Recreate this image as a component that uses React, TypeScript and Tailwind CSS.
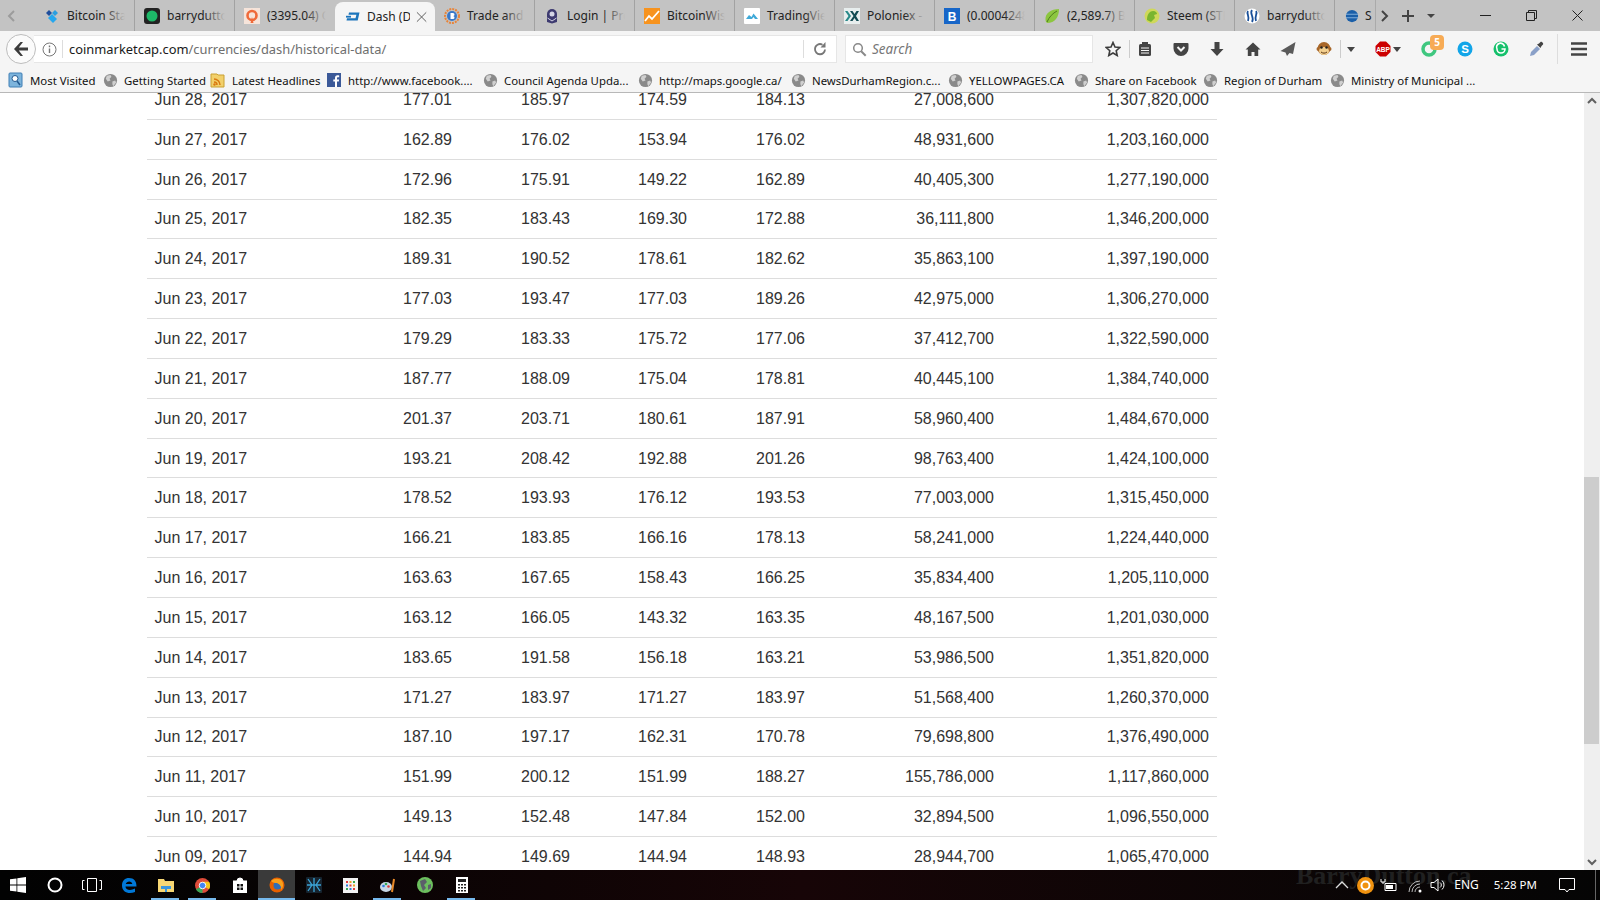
import type { ReactNode } from "react";

const UI = "font-['Noto_Sans','Open_Sans',sans-serif]";

const rows = [
  ["Jun 28, 2017", "177.01", "185.97", "174.59", "184.13", "27,008,600", "1,307,820,000"],
  ["Jun 27, 2017", "162.89", "176.02", "153.94", "176.02", "48,931,600", "1,203,160,000"],
  ["Jun 26, 2017", "172.96", "175.91", "149.22", "162.89", "40,405,300", "1,277,190,000"],
  ["Jun 25, 2017", "182.35", "183.43", "169.30", "172.88", "36,111,800", "1,346,200,000"],
  ["Jun 24, 2017", "189.31", "190.52", "178.61", "182.62", "35,863,100", "1,397,190,000"],
  ["Jun 23, 2017", "177.03", "193.47", "177.03", "189.26", "42,975,000", "1,306,270,000"],
  ["Jun 22, 2017", "179.29", "183.33", "175.72", "177.06", "37,412,700", "1,322,590,000"],
  ["Jun 21, 2017", "187.77", "188.09", "175.04", "178.81", "40,445,100", "1,384,740,000"],
  ["Jun 20, 2017", "201.37", "203.71", "180.61", "187.91", "58,960,400", "1,484,670,000"],
  ["Jun 19, 2017", "193.21", "208.42", "192.88", "201.26", "98,763,400", "1,424,100,000"],
  ["Jun 18, 2017", "178.52", "193.93", "176.12", "193.53", "77,003,000", "1,315,450,000"],
  ["Jun 17, 2017", "166.21", "183.85", "166.16", "178.13", "58,241,000", "1,224,440,000"],
  ["Jun 16, 2017", "163.63", "167.65", "158.43", "166.25", "35,834,400", "1,205,110,000"],
  ["Jun 15, 2017", "163.12", "166.05", "143.32", "163.35", "48,167,500", "1,201,030,000"],
  ["Jun 14, 2017", "183.65", "191.58", "156.18", "163.21", "53,986,500", "1,351,820,000"],
  ["Jun 13, 2017", "171.27", "183.97", "171.27", "183.97", "51,568,400", "1,260,370,000"],
  ["Jun 12, 2017", "187.10", "197.17", "162.31", "170.78", "79,698,800", "1,376,490,000"],
  ["Jun 11, 2017", "151.99", "200.12", "151.99", "188.27", "155,786,000", "1,117,860,000"],
  ["Jun 10, 2017", "149.13", "152.48", "147.84", "152.00", "32,894,500", "1,096,550,000"],
  ["Jun 09, 2017", "144.94", "149.69", "144.94", "148.93", "28,944,700", "1,065,470,000"],
];

function Ico({ size = 16, children }: { size?: number; children: ReactNode }) {
  return (
    <svg width={size} height={size} viewBox="0 0 16 16" className="shrink-0">
      {children}
    </svg>
  );
}

function Globe() {
  return (
    <Ico size={15}>
      <circle cx="8" cy="8" r="7" fill="#8a8a8a" />
      <path d="M4 3l4-1 1 2-2 2 1 2-3 1-2-3zM10 9l3-1 1 2-3 4-1-2z" fill="#d0d0d0" />
    </Ico>
  );
}

const tabs: { title: string; icon: ReactNode }[] = [
  {
    title: "Bitcoin Stack",
    icon: (
      <Ico>
        <path d="M5 2l3 3-3 3-3-3z" fill="#1f4e9c" />
        <path d="M11 2l3 3-3 3-3-3z" fill="#2a9fe0" />
        <path d="M8 6l5 5-4 4-5-5z" fill="#25a7ee" />
      </Ico>
    ),
  },
  {
    title: "barrydutton",
    icon: (
      <Ico>
        <rect width="16" height="16" rx="3" fill="#222" />
        <circle cx="8" cy="8" r="5.500" fill="#1db868" />
      </Ico>
    ),
  },
  {
    title: "(3395.04) Qu",
    icon: (
      <Ico>
        <rect width="16" height="16" fill="#f6e4da" />
        <circle cx="8" cy="7.500" r="4.500" fill="none" stroke="#ef6a3a" strokeWidth="2.600" />
        <path d="M8 9l1.500 6H6.500z" fill="#ef6a3a" />
      </Ico>
    ),
  },
  {
    title: "Dash (D",
    icon: (
      <Ico>
        <path d="M4 3.500h10.500l-1.800 8H1.500l.5-2.200h8.500l.9-3.600H3.500z" fill="#1c75bc" />
        <rect x="1" y="6.800" width="5" height="1.800" fill="#1c75bc" />
      </Ico>
    ),
  },
  {
    title: "Trade and e",
    icon: (
      <Ico>
        <circle cx="8" cy="8" r="7" fill="none" stroke="#e8843a" strokeWidth="2" strokeDasharray="2 1" />
        <circle cx="8" cy="8" r="5" fill="#3a78c8" />
        <path d="M6.500 5h2.500a1.500 1.500 0 010 3 1.500 1.500 0 010 3H6.500z" fill="#fff" />
      </Ico>
    ),
  },
  {
    title: "Login | Prot",
    icon: (
      <Ico>
        <path d="M3 6a5 5 0 0110 0v8l-5 1.500L3 14z" fill="#3d3a70" />
        <rect x="5.500" y="3.500" width="5" height="5" rx="2.500" fill="#d5d5e5" />
        <path d="M3.500 10l4.500 3 4.500-3" stroke="#d5d5e5" fill="none" />
      </Ico>
    ),
  },
  {
    title: "BitcoinWisdom",
    icon: (
      <Ico>
        <rect width="16" height="16" fill="#f7931e" />
        <path d="M1 13l4-5 3 3 7-8" stroke="#fff" strokeWidth="1.800" fill="none" />
      </Ico>
    ),
  },
  {
    title: "TradingView",
    icon: (
      <Ico>
        <rect width="16" height="16" rx="1" fill="#fff" />
        <path d="M2 11l3-4 2.500 2 2-3.500 4.500 5.500h-3l-1.500-2-1.500 2H2z" fill="#3fa9d8" />
      </Ico>
    ),
  },
  {
    title: "Poloniex - B",
    icon: (
      <Ico>
        <rect width="16" height="16" fill="#e8eeee" />
        <path d="M1 3h2.500l3.500 5-3.500 5H1l3.500-5z" fill="#2a8a8a" />
        <path d="M6 3h2.500l2 3 2-3H15l-3 5 3 5h-2.500l-2-3-2 3H6l3.500-5z" fill="#114a52" />
      </Ico>
    ),
  },
  {
    title: "(0.00042482",
    icon: (
      <Ico>
        <rect width="16" height="16" fill="#1766c8" />
        <text x="8" y="13" textAnchor="middle" fontSize="12" fontWeight="700" fill="#fff" fontFamily="Liberation Sans">
          B
        </text>
      </Ico>
    ),
  },
  {
    title: "(2,589.7) Bit",
    icon: (
      <Ico>
        <path d="M15 1C7 1 1 5 1.500 12c0 1 .5 2 1.500 3C11 15 15 9 15 1z" fill="#8cc63f" />
        <path d="M3 14C5 9 9 5 13 3" stroke="#4f7a1e" fill="none" />
      </Ico>
    ),
  },
  {
    title: "Steem (STE",
    icon: (
      <Ico>
        <circle cx="8" cy="8" r="7.500" fill="#cfd85a" />
        <path d="M3 12c0-6 3-9 6-9 3 0 4 2 4 3l-3 1 1 3-4 4z" fill="#7ab52f" />
      </Ico>
    ),
  },
  {
    title: "barrydutton",
    icon: (
      <Ico>
        <circle cx="8" cy="8" r="7.500" fill="#fff" />
        <path d="M4 3C2 6 6 8 4 13M8 2c-3 4 3 7 0 12M12 3c2 3-2 5 0 10" stroke="#1a5099" strokeWidth="1.800" fill="none" />
      </Ico>
    ),
  },
];

const bookmarks: { label: string; w: string; icon: ReactNode }[] = [
  {
    label: "Most Visited",
    w: "w-[95px]",
    icon: (
      <Ico>
        <rect x="1" y="1" width="13" height="14" rx="1" fill="#7db4dc" stroke="#3f7fb5" />
        <circle cx="7" cy="6.500" r="3" fill="#fff" stroke="#245a90" />
        <path d="M9 9l3 4" stroke="#245a90" strokeWidth="1.500" />
      </Ico>
    ),
  },
  { label: "Getting Started", w: "w-[107px]", icon: <Globe /> },
  {
    label: "Latest Headlines",
    w: "w-[116px]",
    icon: (
      <Ico>
        <path d="M1 2h6l1 1h6v12H1z" fill="#f2d06b" stroke="#c9a033" />
        <path d="M4 7a6 6 0 016 6M4 10a3 3 0 013 3" stroke="#d97a12" strokeWidth="1.500" fill="none" />
        <circle cx="4.500" cy="12.500" r="1.200" fill="#d97a12" />
      </Ico>
    ),
  },
  {
    label: "http://www.facebook....",
    w: "w-[157px]",
    icon: (
      <Ico>
        <rect x="1" y="1" width="14" height="14" fill="#3b5998" />
        <path d="M11 15V9.500h1.800l.3-2H11V6.200c0-.6.200-1 1-1h1.200V3.400c-.3 0-1-.1-1.700-.1-1.500 0-2.500 1-2.500 2.600v1.600H7.300v2H9V15z" fill="#fff" />
      </Ico>
    ),
  },
  { label: "Council Agenda Upda...", w: "w-[155px]", icon: <Globe /> },
  { label: "http://maps.google.ca/", w: "w-[153px]", icon: <Globe /> },
  { label: "NewsDurhamRegion.c...", w: "w-[157px]", icon: <Globe /> },
  { label: "YELLOWPAGES.CA", w: "w-[126px]", icon: <Globe /> },
  { label: "Share on Facebook", w: "w-[129px]", icon: <Globe /> },
  { label: "Region of Durham", w: "w-[127px]", icon: <Globe /> },
  { label: "Ministry of Municipal ...", w: "w-[150px]", icon: <Globe /> },
];

function TabStrip() {
  return (
    <div className={`flex h-[31px] shrink-0 items-end bg-[#c3c3c3] ${UI}`}>
      <div className="flex h-[31px] w-[35px] shrink-0 items-center pl-[5px]">
        <svg width="12" height="14" viewBox="0 0 12 14">
          <path d="M9 2L4 7l5 5" stroke="#9c9c9c" strokeWidth="2" fill="none" />
        </svg>
      </div>
      {tabs.map((t, i) =>
        i === 3 ? (
          <div key={i} className="flex h-[29px] w-[100px] shrink-0 items-center rounded-t-lg bg-[#f5f5f5] pl-[10px] pr-[8px]">
            {t.icon}
            <span className="ml-[6px] w-[46px] overflow-hidden whitespace-nowrap pt-px text-[12px] text-[#222]">{t.title}</span>
            <svg width="12" height="12" viewBox="0 0 12 12" className="ml-[6px]">
              <path d="M1 1l10 10M11 1L1 11" stroke="#555" strokeWidth="1" />
            </svg>
          </div>
        ) : (
          <div
            key={i}
            className={`relative flex h-[31px] w-[100px] shrink-0 items-center overflow-hidden pl-[9px] ${i === 2 ? "" : "border-r border-r-[#a2a2a2]"}`}
          >
            {t.icon}
            <span className="ml-[7px] whitespace-nowrap pt-px text-[12px] text-[#222]">{t.title}</span>
            <div className="absolute inset-y-0 right-0 w-[30px] bg-linear-to-r from-transparent to-[#c3c3c3] to-70%" />
          </div>
        ),
      )}
      <div className="flex h-[31px] w-[40px] shrink-0 items-center overflow-hidden pl-[10px]">
        <Ico size={14}>
          <circle cx="8" cy="8" r="7" fill="#1b5fa8" />
          <path d="M1 6h14M1 10h14" stroke="#8db8e0" />
        </Ico>
        <span className="ml-[6px] pt-px text-[12px] text-[#222]">S</span>
      </div>
      <div className="flex h-[31px] flex-1 items-center border-l border-l-[#aaa]">
        <svg width="10" height="14" viewBox="0 0 10 14" className="ml-[4px]">
          <path d="M2 2l5 5-5 5" stroke="#444" strokeWidth="2" fill="none" />
        </svg>
        <svg width="14" height="14" viewBox="0 0 14 14" className="ml-[11px]">
          <path d="M7 1v12M1 7h12" stroke="#444" strokeWidth="2" />
        </svg>
        <svg width="10" height="6" viewBox="0 0 10 6" className="ml-[11px]">
          <path d="M1 1h8L5 5z" fill="#444" />
        </svg>
        <svg width="11" height="2" viewBox="0 0 11 2" className="ml-[44px]">
          <rect width="11" height="1" fill="#222" />
        </svg>
        <svg width="11" height="11" viewBox="0 0 11 11" className="ml-[35px]">
          <path d="M.5 2.500h8v8h-8zM2.500 2.500v-2h8v8h-2" stroke="#222" fill="none" />
        </svg>
        <svg width="11" height="11" viewBox="0 0 11 11" className="ml-[35px]">
          <path d="M.5.500l10 10M10.500.500l-10 10" stroke="#222" />
        </svg>
      </div>
    </div>
  );
}

function NavBar() {
  return (
    <div className={`flex h-[36px] shrink-0 items-center bg-[#f5f5f5] ${UI}`}>
      <div className="z-10 ml-[6px] flex h-[30px] w-[30px] shrink-0 items-center justify-center rounded-full border border-[#bdbdbd] bg-[#fbfbfb]">
        <svg width="16" height="14" viewBox="0 0 16 14">
          <path d="M7.500 0L1 7l6.500 7h2.500L5.800 8.500H15v-3H5.800L10 0z" fill="#3c3c3c" />
        </svg>
      </div>
      <div className="-ml-[2px] flex h-[28px] w-[803px] shrink-0 items-center border border-l-0 border-[#e6e6e6] bg-white">
        <svg width="15" height="15" viewBox="0 0 15 15" className="ml-[8px] shrink-0">
          <circle cx="7.500" cy="7.500" r="6.500" fill="none" stroke="#777" />
          <path d="M7.500 6.500v4.500M7.500 3.500v1.700" stroke="#777" strokeWidth="1.400" />
        </svg>
        <div className="ml-[5px] h-[18px] w-px bg-[#ddd]" />
        <span className="ml-[6px] whitespace-nowrap pt-px text-[12.9px] text-[#1a1a1a]">
          coinmarketcap.com<span className="text-[#6e6e6e]">/currencies/dash/historical-data/</span>
        </span>
        <div className="ml-auto h-[18px] w-px bg-[#ddd]" />
        <svg width="14" height="14" viewBox="0 0 14 14" className="mx-[9px] shrink-0">
          <path d="M12 7.500A5 5 0 112 7a5 5 0 017.500-4.300" stroke="#777" strokeWidth="1.800" fill="none" />
          <path d="M12.500 0v5.500H7.500z" fill="#777" />
        </svg>
      </div>
      <div className="ml-[8px] flex h-[28px] w-[248px] shrink-0 items-center border border-[#e6e6e6] bg-white">
        <svg width="15" height="15" viewBox="0 0 15 15" className="ml-[6px]">
          <circle cx="6" cy="6" r="4.300" fill="none" stroke="#888" strokeWidth="1.500" />
          <path d="M9.200 9.200l4.500 4.500" stroke="#888" strokeWidth="2" />
        </svg>
        <span className="ml-[5px] pt-px text-[13.5px] italic text-[#777]">Search</span>
      </div>
      <div className="relative flex-1 self-stretch">
        <ToolIcon x="left-[12px]">
          <path d="M8 1.500l2 4.500 4.800.5-3.600 3.200 1 4.800L8 12l-4.200 2.500 1-4.800L1.200 6.500 6 6z" fill="none" stroke="#3c3c3c" strokeWidth="1.600" />
        </ToolIcon>
        <div className="absolute left-[36px] top-[9px] h-[18px] w-px bg-[#ccc]" />
        <ToolIcon x="left-[44px]">
          <rect x="2" y="3" width="12" height="12" rx="1.500" fill="#444" />
          <rect x="5" y="1" width="6" height="3" fill="#444" />
          <path d="M4 7h8M4 9.500h8M4 12h8" stroke="#f5f5f5" />
        </ToolIcon>
        <ToolIcon x="left-[80px]">
          <path d="M1.500 2h13a1 1 0 011 1v4.500a7.500 7.500 0 01-15 0V3a1 1 0 011-1z" fill="#444" />
          <path d="M4.500 6L8 9.500 11.500 6" stroke="#f5f5f5" strokeWidth="2" fill="none" />
        </ToolIcon>
        <ToolIcon x="left-[116px]">
          <path d="M5.500 1h5v7h4L8 15 1.500 8h4z" fill="#444" />
        </ToolIcon>
        <ToolIcon x="left-[152px]">
          <path d="M8 1.500L.5 8.500h2.300V15h3.700v-4h3v4h3.700V8.500h2.300z" fill="#444" />
        </ToolIcon>
        <ToolIcon x="left-[187px]">
          <path d="M15.500 1L.5 10l5 1.500L7 15l2.500-3L13 13z" fill="#5a5a5a" />
        </ToolIcon>
        <ToolIcon x="left-[223px]">
          <circle cx="2.500" cy="8" r="2" fill="#a8672a" />
          <circle cx="13.500" cy="8" r="2" fill="#a8672a" />
          <circle cx="8" cy="7.500" r="6.500" fill="#a8672a" />
          <ellipse cx="8" cy="10" rx="5" ry="4" fill="#f2cf8f" />
          <circle cx="5.500" cy="6.500" r="1.200" fill="#222" />
          <circle cx="10.500" cy="6.500" r="1.200" fill="#222" />
          <path d="M5 11c2 1.500 4 1.500 6 0" stroke="#5a3212" fill="none" />
        </ToolIcon>
        <div className="absolute left-[247px] top-[9px] h-[18px] w-px bg-[#ccc]" />
        <Caret x="left-[254px]" />
        <ToolIcon x="left-[282px]">
          <path d="M5 .500h6L15.500 5v6L11 15.500H5L.5 11V5z" fill="#c00" />
          <text x="8" y="10.500" textAnchor="middle" fontSize="6.500" fontWeight="700" fill="#fff" fontFamily="Liberation Sans">
            ABP
          </text>
        </ToolIcon>
        <Caret x="left-[300px]" />
        <ToolIcon x="left-[328px]">
          <circle cx="8" cy="8" r="6" fill="none" stroke="#3fc77f" strokeWidth="3.500" />
        </ToolIcon>
        <div className="absolute left-[337px] top-[4px] flex h-[15px] w-[14px] items-center justify-center rounded-sm bg-[#f7ab55] text-[10px] font-bold text-white">
          5
        </div>
        <ToolIcon x="left-[364px]">
          <circle cx="8" cy="8" r="7.500" fill="#12a5e8" />
          <text x="8" y="12" textAnchor="middle" fontSize="11.500" fontWeight="700" fill="#fff" fontFamily="Liberation Sans">
            S
          </text>
        </ToolIcon>
        <ToolIcon x="left-[400px]">
          <circle cx="8" cy="8" r="7.500" fill="#15c06b" />
          <path d="M11.500 5.500A4 4 0 104 8a4 4 0 008 0H8.500" stroke="#fff" strokeWidth="1.600" fill="none" />
        </ToolIcon>
        <ToolIcon x="left-[436px]">
          <path d="M1 15l1-4 6-6 3 3-6 6z" fill="#8aa0c8" />
          <path d="M8 3.500l2-1 1.500-1.500c1-1 3.500 1.500 2.500 2.500L12.500 5l-1 2z" fill="#444" />
        </ToolIcon>
        <div className="absolute left-[464px] top-[3px] h-[30px] w-px bg-[#ddd]" />
        <ToolIcon x="left-[478px]">
          <path d="M0 2.500h16M0 8h16M0 13.500h16" stroke="#444" strokeWidth="2.400" />
        </ToolIcon>
      </div>
    </div>
  );
}

function ToolIcon({ x, children }: { x: string; children: ReactNode }) {
  return (
    <div className={`absolute top-[10px] ${x}`}>
      <Ico>{children}</Ico>
    </div>
  );
}

function Caret({ x }: { x: string }) {
  return (
    <svg width="8" height="5" viewBox="0 0 8 5" className={`absolute top-[16px] ${x}`}>
      <path d="M0 0h8L4 5z" fill="#444" />
    </svg>
  );
}

function Bookmarks() {
  return (
    <div className={`flex h-[26px] shrink-0 items-center border-b border-b-[#b8b8b8] bg-[#f5f5f5] pl-[8px] pt-[2px] ${UI}`}>
      {bookmarks.map((b) => (
        <div key={b.label} className={`flex shrink-0 items-center ${b.w}`}>
          {b.icon}
          <span className="ml-[6px] whitespace-nowrap text-[11.4px] text-[#111]">{b.label}</span>
        </div>
      ))}
    </div>
  );
}

function Table() {
  return (
    <div className="-mt-[13px] ml-[147px] w-[1070px] font-['Liberation_Sans',Arial,sans-serif] text-[16px] text-[#333]">
      {rows.map((r) => (
        <div key={r[0]} className="flex h-[39.85px] items-center border-b border-b-[#ddd] pt-px">
          <div className="w-[213px] pl-[7.5px]">{r[0]}</div>
          <div className="w-[100px] pr-[8px] text-right">{r[1]}</div>
          <div className="w-[118px] pr-[8px] text-right">{r[2]}</div>
          <div className="w-[117px] pr-[8px] text-right">{r[3]}</div>
          <div className="w-[118px] pr-[8px] text-right">{r[4]}</div>
          <div className="w-[189px] pr-[8px] text-right">{r[5]}</div>
          <div className="w-[215px] pr-[8px] text-right">{r[6]}</div>
        </div>
      ))}
    </div>
  );
}

function Scrollbar() {
  return (
    <div className="flex w-[16px] shrink-0 flex-col bg-[#efefef]">
      <svg width="16" height="16" viewBox="0 0 16 16" className="shrink-0">
        <path d="M4 10l4-4 4 4" stroke="#606060" strokeWidth="2" fill="none" />
      </svg>
      <div className="mt-[368px] h-[267px] w-[15px] bg-[#cdcdcd]" />
      <svg width="16" height="16" viewBox="0 0 16 16" className="mt-auto shrink-0">
        <path d="M4 6l4 4 4-4" stroke="#606060" strokeWidth="2" fill="none" />
      </svg>
    </div>
  );
}

function TaskIcon({ active, open, children }: { active?: boolean; open?: boolean; children: ReactNode }) {
  return (
    <div className={`relative flex h-[30px] w-[37px] shrink-0 items-center justify-center ${active ? "bg-[#3a3a3a]" : ""}`}>
      {children}
      {active && <div className="absolute inset-x-0 bottom-0 h-[2px] bg-[#76b9ed]" />}
      {open && <div className="absolute bottom-0 left-[4px] h-[2px] w-[28px] bg-[#76b9ed]" />}
    </div>
  );
}

function Taskbar() {
  return (
    <div className={`relative flex h-[30px] shrink-0 items-center overflow-hidden bg-linear-to-r from-[#020202] via-[#170507] to-[#050505] ${UI}`}>
      <div className="absolute -top-[14px] left-[1296px] whitespace-nowrap font-['Liberation_Serif',serif] text-[26px] font-bold text-[#202020]">
        BarryDutton.ca
      </div>
      <div className="relative -ml-px flex">
        <TaskIcon>
          <svg width="16" height="16" viewBox="0 0 16 16">
            <path d="M0 2.300l6.500-.9v6.200H0zM7.300 1.300L16 0v7.600H7.300zM0 8.400h6.500v6.200L0 13.700zM7.300 8.400H16V16l-8.700-1.300z" fill="#fff" />
          </svg>
        </TaskIcon>
        <TaskIcon>
          <svg width="16" height="16" viewBox="0 0 16 16">
            <circle cx="8" cy="8" r="6.500" fill="none" stroke="#fff" strokeWidth="2" />
          </svg>
        </TaskIcon>
        <TaskIcon>
          <svg width="20" height="14" viewBox="0 0 20 14">
            <path d="M5.500.500h9v13h-9zM2.500 2.500H.5v9h2M17.500 2.500h2v9h-2" stroke="#fff" fill="none" />
          </svg>
        </TaskIcon>
        <TaskIcon>
          <svg width="16" height="17" viewBox="0 0 16 16">
            <path d="M1 8C1 3 4 .5 8 .5c5 0 7.500 3 7.500 8.500H4.500c0 3.500 5 4.500 9.500 2v3.500c-6 2.500-13 .5-13-6.500zM4.800 6.500h6.500C11 3 5.500 3 4.800 6.500z" fill="#0078d7" />
          </svg>
        </TaskIcon>
        <TaskIcon open>
          <svg width="16" height="14" viewBox="0 0 16 14">
            <path d="M0 1h6l1 2h9v11H0z" fill="#f7d774" />
            <path d="M3 8h10v3H9v3H7v-3H3z" fill="#3a96dd" />
          </svg>
        </TaskIcon>
        <TaskIcon open>
          <svg width="15" height="15" viewBox="0 0 16 16">
            <circle cx="8" cy="8" r="8" fill="#dd4b39" />
            <path d="M8 8L1 12a8 8 0 007 4z" fill="#3aa757" />
            <path d="M8 8l7 4a8 8 0 00-.1-8H8z" fill="#f5c518" />
            <circle cx="8" cy="8" r="3.500" fill="#4285f4" stroke="#fff" />
          </svg>
        </TaskIcon>
        <TaskIcon>
          <svg width="14" height="16" viewBox="0 0 14 16">
            <path d="M0 4h14v12H0zM4 4a3 3 0 016 0" fill="#fff" stroke="#fff" />
            <path d="M4 7h2.500v2.500H4zM7.500 7H10v2.500H7.500zM4 10.500h2.500V13H4zM7.500 10.500H10V13H7.500z" fill="#111" />
          </svg>
        </TaskIcon>
        <TaskIcon active>
          <svg width="16" height="16" viewBox="0 0 16 16">
            <circle cx="8" cy="8" r="7.500" fill="#e66000" />
            <circle cx="8.500" cy="8.500" r="4" fill="#2f6db8" />
            <path d="M2 4c3-3 9-3 11 0 2 3 1 7-1 9 1-4-2-6-4-7-2 0-4 0-6-2z" fill="#f9a11b" />
          </svg>
        </TaskIcon>
        <TaskIcon>
          <svg width="16" height="16" viewBox="0 0 16 16">
            <rect width="16" height="16" rx="1" fill="#16232e" />
            <path d="M2 2l4 6-4 6M14 2l-4 6 4 6M8 1v14M1 8h14" stroke="#3ba3d6" strokeWidth="1.300" fill="none" />
          </svg>
        </TaskIcon>
        <TaskIcon>
          <svg width="15" height="15" viewBox="0 0 15 15">
            <rect width="15" height="15" fill="#f3f3f3" />
            <path d="M3 3h2v2H3z" fill="#e03a3a" />
            <path d="M6.500 3h2v2h-2z" fill="#f0a020" />
            <path d="M10 3h2v2h-2z" fill="#36a853" />
            <path d="M3 6.500h2v2H3z" fill="#2a7de0" />
            <path d="M6.500 6.500h2v2h-2z" fill="#e03a3a" />
            <path d="M10 6.500h2v2h-2z" fill="#f0a020" />
            <path d="M3 10h2v2H3z" fill="#36a853" />
            <path d="M6.500 10h2v2h-2z" fill="#2a7de0" />
            <path d="M10 10h2v2h-2z" fill="#e03a3a" />
          </svg>
        </TaskIcon>
        <TaskIcon open>
          <svg width="16" height="16" viewBox="0 0 16 16">
            <ellipse cx="6" cy="10" rx="6" ry="5" fill="#c8d8e8" />
            <circle cx="3.500" cy="9" r="1.300" fill="#2a7de0" />
            <circle cx="6" cy="7" r="1.300" fill="#36a853" />
            <circle cx="8.500" cy="9.500" r="1.300" fill="#e03a3a" />
            <path d="M12 15l2-13" stroke="#e88a2a" strokeWidth="2" />
          </svg>
        </TaskIcon>
        <TaskIcon>
          <svg width="16" height="16" viewBox="0 0 16 16">
            <circle cx="8" cy="8" r="8" fill="#6cbf5e" />
            <path d="M3 4l5-2 2 3-3 3 2 3-3 3-2-5z" fill="#5b5f6a" />
            <path d="M11 8l3-1 0 4-3 2z" fill="#5b5f6a" />
          </svg>
        </TaskIcon>
        <TaskIcon open>
          <svg width="12" height="16" viewBox="0 0 12 16">
            <rect width="12" height="16" fill="#fff" />
            <path d="M2 2h8v3H2z" fill="#222" />
            <path d="M2 7h2v1.500H2zM5 7h2v1.500H5zM8 7h2v1.500H8zM2 10h2v1.500H2zM5 10h2v1.500H5zM8 10h2v1.500H8zM2 13h2v1.500H2zM5 13h2v1.500H5zM8 13h2v1.500H8z" fill="#222" />
          </svg>
        </TaskIcon>
      </div>
      <div className="relative ml-auto flex h-full items-center text-[12px] text-white">
        <svg width="14" height="8" viewBox="0 0 14 8" className="mr-[8px]">
          <path d="M1 7l6-6 6 6" stroke="#ddd" strokeWidth="1.300" fill="none" />
        </svg>
        <svg width="17" height="17" viewBox="0 0 17 17" className="mr-[6px]">
          <circle cx="8.500" cy="8.500" r="8.500" fill="#f0920f" />
          <circle cx="8.500" cy="8.500" r="4" fill="none" stroke="#fff" strokeWidth="2" />
        </svg>
        <svg width="17" height="14" viewBox="0 0 17 14" className="mr-[10px]">
          <path d="M5 5.500h11v7H5z" stroke="#fff" fill="none" />
          <path d="M6 7h7v4H6z" fill="#fff" />
          <path d="M1 1v3h4V1M3 4v2" stroke="#fff" />
        </svg>
        <svg width="16" height="15" viewBox="0 0 16 15" className="mr-[7px]">
          <path d="M2 14a11 11 0 0111-11M5 14a8 8 0 018-8M8 14a5 5 0 015-5" stroke="#bbb" fill="none" />
          <circle cx="13" cy="13" r="1.500" fill="#fff" />
        </svg>
        <svg width="16" height="14" viewBox="0 0 16 14" className="mr-[8px]">
          <path d="M1 4.500h3L8 1v12L4 9.500H1z" stroke="#fff" fill="none" />
          <path d="M10 4.500a3 3 0 010 5M12 2.500a6 6 0 010 9" stroke="#fff" fill="none" />
        </svg>
        <span className="mr-[15px]">ENG</span>
        <span className="mr-[22px] whitespace-nowrap text-[11.5px]">5:28 PM</span>
        <svg width="16" height="15" viewBox="0 0 16 15" className="mr-[25px]">
          <path d="M.5.500h15v11H10l-2 2.500-2-2.500H.5z" stroke="#fff" fill="none" />
        </svg>
        <div className="absolute right-[4px] top-0 h-full w-px bg-[#666]" />
      </div>
    </div>
  );
}

export default function App() {
  return (
    <div className="flex h-screen w-[1600px] flex-col overflow-hidden bg-white">
      <TabStrip />
      <NavBar />
      <Bookmarks />
      <div className="flex min-h-0 flex-1">
        <div className="min-w-0 flex-1 overflow-hidden bg-white">
          <Table />
        </div>
        <Scrollbar />
      </div>
      <Taskbar />
    </div>
  );
}
